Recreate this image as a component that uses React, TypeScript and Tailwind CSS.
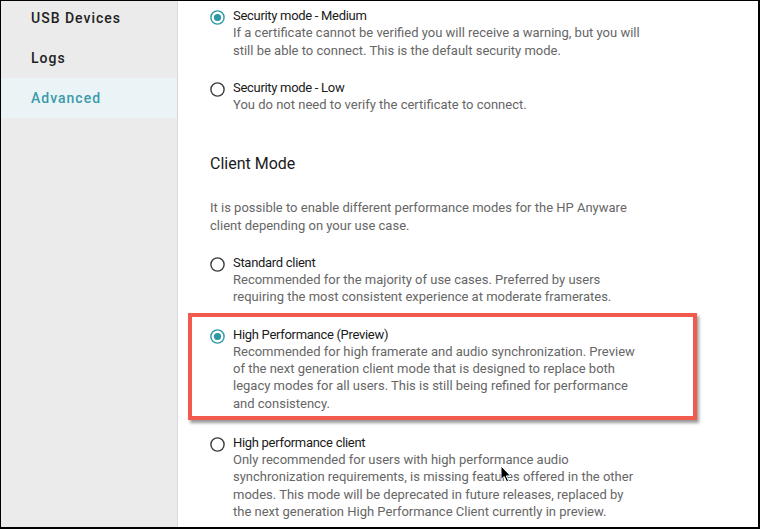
import type { ReactNode } from 'react'

interface OptionProps {
  title: string
  children: ReactNode
  selected?: boolean
  className?: string
}

function Radio({ selected }: { selected?: boolean }) {
  return (
    <svg className="mt-[3px] h-[15px] w-[15px] shrink-0" viewBox="0 0 15 15">
      <circle
        cx="7.5"
        cy="7.5"
        r="6.6"
        fill="none"
        stroke={selected ? '#2b98a6' : '#3a3a3a'}
        strokeWidth="1.4"
      />
      {selected && <circle cx="7.5" cy="7.5" r="3.6" fill="#2b98a6" />}
    </svg>
  )
}

function Option({ title, children, selected, className = '' }: OptionProps) {
  return (
    <div className={`flex gap-[8px] ${className}`}>
      <Radio selected={selected} />
      <div className="text-[13px] leading-[17.25px]">
        <div className="tracking-[-0.3px] text-[#1a1a1a]">{title}</div>
        <div className="text-[#666666]">{children}</div>
      </div>
    </div>
  )
}

const navItems = ['USB Devices', 'Logs', 'Advanced']

export default function App() {
  return (
    <div className="relative flex h-[529px] w-[760px] overflow-hidden border-t border-l border-r-2 border-b-2 border-black bg-white font-['Roboto',sans-serif]">
      <aside className="w-[177px] shrink-0 border-r border-[#dadada] bg-[#ebebeb]">
        <nav className="-mt-[3px]">
          {navItems.map((item) => (
            <div
              key={item}
              className={`flex h-10 items-center pl-[30px] text-[14px] font-medium tracking-[1px] ${
                item === 'Advanced' ? 'bg-[#eaf4f6] text-[#3b9aab]' : 'text-[#222222]'
              }`}
            >
              {item}
            </div>
          ))}
        </nav>
      </aside>

      <main className="flex-1 pt-[6px] pl-[32px]">
        <div className="w-[431px]">
          <Option title="Security mode - Medium" selected>
            If a certificate cannot be verified you will receive a warning, but you will still be able
            to connect. This is the default security mode.
          </Option>
          <Option title="Security mode - Low" className="mt-[20px]">
            You do not need to verify the certificate to connect.
          </Option>

          <h2 className="mt-[40px] text-[16px] leading-[22px] text-[#1a1a1a]">Client Mode</h2>

          <p className="mt-[24px] text-[13px] leading-[17.25px] text-[#666666]">
            It is possible to enable different performance modes for the HP Anyware client depending
            on your use case.
          </p>

          <Option title="Standard client" className="mt-[20px]">
            Recommended for the majority of use cases. Preferred by users requiring the most
            consistent experience at moderate framerates.
          </Option>

          <div className="relative mt-[20px]">
            <div className="pointer-events-none absolute -top-[13px] -right-[56px] -bottom-[8px] -left-[22px] border-[4px] border-[#f25a4e] shadow-[2px_3px_3px_rgba(0,0,0,0.4)]" />
            <Option title="High Performance (Preview)" selected>
              Recommended for high framerate and audio synchronization. Preview of the next
              generation client mode that is designed to replace both legacy modes for all users.
              This is still being refined for performance and consistency.
            </Option>
          </div>

          <Option title="High performance client" className="mt-[22px]">
            Only recommended for users with high performance audio synchronization requirements, is
            missing features offered in the other modes. This mode will be deprecated in future
            releases, replaced by the next generation High Performance Client currently in preview.
          </Option>
        </div>
      </main>

      <svg
        className="pointer-events-none absolute top-[464px] left-[499px] h-[18px] w-[12px]"
        viewBox="0 0 12 18"
      >
        <path
          d="M1 1 L1 14.5 L4.2 11.6 L6.6 16.8 L8.6 15.9 L6.3 10.9 L10.6 10.9 Z"
          fill="#000000"
          stroke="#ffffff"
          strokeWidth="1"
          strokeLinejoin="round"
        />
      </svg>
    </div>
  )
}
